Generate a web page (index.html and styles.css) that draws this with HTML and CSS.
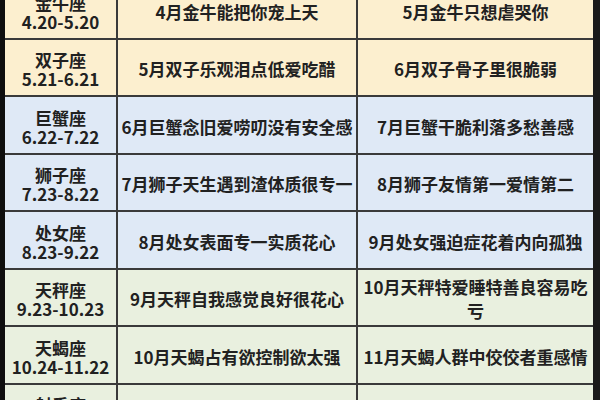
FILE: index.html
```html
<!DOCTYPE html>
<html lang="zh-CN">
<head>
<meta charset="utf-8">
<link rel="stylesheet" href="styles.css">
</head>
<body>
<div class="sheet">
  <div class="grid">
    <div class="cell sign yellow"><span>金牛座</span><span>4.20-5.20</span></div>
    <div class="cell yellow">4月金牛能把你宠上天</div>
    <div class="cell yellow">5月金牛只想虐哭你</div>

    <div class="cell sign yellow"><span>双子座</span><span>5.21-6.21</span></div>
    <div class="cell yellow">5月双子乐观泪点低爱吃醋</div>
    <div class="cell yellow">6月双子骨子里很脆弱</div>

    <div class="cell sign blue"><span>巨蟹座</span><span>6.22-7.22</span></div>
    <div class="cell blue">6月巨蟹念旧爱唠叨没有安全感</div>
    <div class="cell blue">7月巨蟹干脆利落多愁善感</div>

    <div class="cell sign blue"><span>狮子座</span><span>7.23-8.22</span></div>
    <div class="cell blue">7月狮子天生遇到渣体质很专一</div>
    <div class="cell blue">8月狮子友情第一爱情第二</div>

    <div class="cell sign blue"><span>处女座</span><span>8.23-9.22</span></div>
    <div class="cell blue">8月处女表面专一实质花心</div>
    <div class="cell blue">9月处女强迫症花着内向孤独</div>

    <div class="cell sign green"><span>天秤座</span><span>9.23-10.23</span></div>
    <div class="cell green">9月天秤自我感觉良好很花心</div>
    <div class="cell green">10月天秤特爱睡特善良容易吃<br>亏</div>

    <div class="cell sign green"><span>天蝎座</span><span>10.24-11.22</span></div>
    <div class="cell green">10月天蝎占有欲控制欲太强</div>
    <div class="cell green">11月天蝎人群中佼佼者重感情</div>

    <div class="cell sign green"><span>射手座</span><span>11.23-12.21</span></div>
    <div class="cell green">11月射手在内不回信息擅长撩</div>
    <div class="cell green">12月射手向往自由只想命不凡</div>
  </div>
</div>
</body>
</html>
```
FILE: styles.css
```css
html, body {
  margin: 0;
  padding: 0;
  background: #ffffff;
}
body {
  width: 600px;
  height: 400px;
  overflow: hidden;
  font-family: "Noto Sans CJK SC", "Noto Sans", sans-serif;
  font-weight: 700;
  color: #212121;
}
.sheet {
  margin-top: -18px;
  background: #3a3a3a;
  border-left: 5px solid #0e0e0e;
  border-right: 7px solid #1a1a1a;
}
.grid {
  display: grid;
  grid-template-columns: 111px 238px 235px;
  grid-auto-rows: 55.5px;
  column-gap: 2px;
  row-gap: 2px;
  padding-bottom: 2px;
}
.cell {
  display: flex;
  align-items: center;
  justify-content: center;
  text-align: center;
  font-size: 17px;
  line-height: 24px;
  padding: 4px 4px 0;
  white-space: nowrap;
  overflow: hidden;
}
.sign {
  flex-direction: column;
  line-height: 19px;
}
.yellow { background: #fcefcf; }
.blue { background: #dfe9f6; }
.green { background: #e9f0df; }
```
